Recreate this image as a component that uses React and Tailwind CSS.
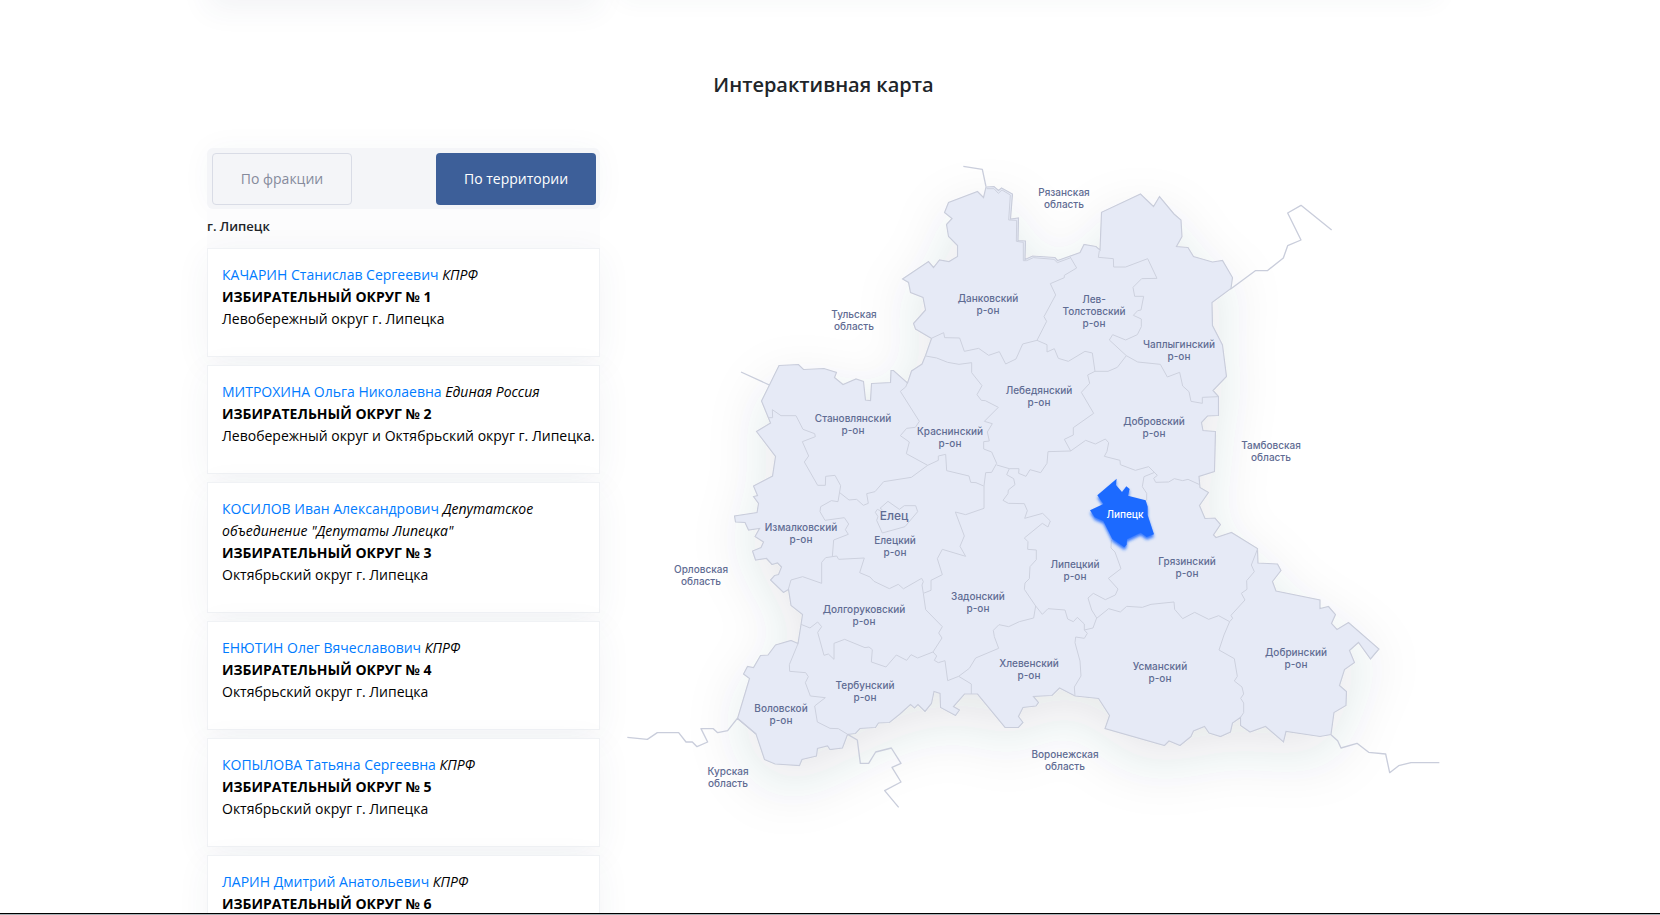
import React from 'react'

const deputies = [
    { id: 1, name: "КАЧАРИН Станислав Сергеевич", party: "КПРФ", area: "Левобережный округ г. Липецка" },
    { id: 2, name: "МИТРОХИНА Ольга Николаевна", party: "Единая Россия", area: "Левобережный округ и Октябрьский округ г. Липецка." },
    { id: 3, name: "КОСИЛОВ Иван Александрович", party: "Депутатское объединение \"Депутаты Липецка\"", area: "Октябрьский округ г. Липецка" },
    { id: 4, name: "ЕНЮТИН Олег Вячеславович", party: "КПРФ", area: "Октябрьский округ г. Липецка" },
    { id: 5, name: "КОПЫЛОВА Татьяна Сергеевна", party: "КПРФ", area: "Октябрьский округ г. Липецка" },
    { id: 6, name: "ЛАРИН Дмитрий Анатольевич", party: "КПРФ" },
]

const region = "986,187 994,186.5 998.5,190.5 1001.5,188 1012.5,194 1010.5,219 1018.5,218 1018,240.5 1025.5,241 1025,259.5 1032.5,256 1055,257.5 1057.5,260.5 1080,252.5 1084,244.5 1096,246.5 1100,250 1101.5,212.3 1140.5,194 1153.5,206.5 1159.5,196.5 1174,214 1181,220 1182,236.5 1176.5,246.5 1188,247.5 1193.5,256.5 1212.5,262 1222.5,260.5 1232.5,277.5 1231,288.5 1212,302.5 1212.5,325.5 1222.5,345 1226.5,376.5 1213,390.5 1218.5,396.5 1218.5,415.5 1207.5,416 1201.5,422.5 1203,430.5 1215.5,431.5 1214.5,471.5 1199,476.5 1200,487.5 1208.5,492.5 1199.5,505.5 1205,518.5 1215,518 1220.5,524.5 1213.5,535 1216,537.5 1231.5,532.5 1257.5,548.5 1258,563 1277.5,564 1281,570.5 1272.5,581.5 1276,591 1320,600 1320,608.5 1328.5,606.5 1335.5,614.5 1331.5,623.5 1337,629.5 1348.5,622.5 1379,649 1370.5,659 1358.5,642.5 1349.5,650.5 1354.5,662.5 1344.5,669.5 1339.5,685.5 1346.5,691.5 1346,705.5 1334,712.5 1331,734.5 1320,736.5 1286,731.5 1283.5,742 1265.5,726.5 1250,732 1240.5,725.5 1240.5,717.5 1232.5,723 1230.5,732 1220.5,736.5 1209,733 1204.5,726.5 1193.5,731 1191,736.5 1180,745.5 1169,741 1164.5,745.5 1105,728.5 1109.5,715.5 1098.5,698.5 1075,696 1059.5,688 1052,695.5 1033.5,696.5 1038.5,702.5 1036,706 1023,707.5 1018.5,716.5 1023,722.5 1018.5,727.5 1005,727.5 977.5,694 964.5,694 953.5,706.5 959.5,710 955.5,715.5 940.5,707.5 940,693.5 934,691.5 931.5,703.5 925,711.5 918,704.5 914.5,708 910.5,704.5 900,714 889.5,722.5 878.5,723 875.5,727.5 860,728.5 855.5,733.5 847.5,734.5 842.5,748 830,749.5 827.5,746 817.5,748.5 816.5,756 802,759.5 799.5,765.5 775,764 764.5,759.5 756,734 737.5,718.5 749.5,678.5 743.5,674 747.5,666.5 753.5,667.5 760.5,655.5 768,655 775.5,645 791,640.5 798,643.5 801,624.5 802.5,614.5 791,605.5 788.5,589.5 783.5,592.5 770.5,580 774.5,575.5 778.5,574.5 781.5,567 777.5,563 772,564.5 766.5,558.5 755.5,560 752.5,551 761,547.5 763.5,542 755,536.5 759.5,528.5 748.5,530 745,522.5 735.5,522 734.5,516 757,512.5 758.5,503.5 753.5,496.5 757.5,495.5 753.5,486 772.5,476 775.5,456.5 756.5,431.5 770.5,423 761.5,401 779,365.5 798.5,364.5 803.5,369.5 824,368.5 836.5,372.5 834.5,377.5 843,384.5 856,379 863.5,381.5 865.5,400 870.5,400.5 871.5,383.5 890.5,382.5 891,370.5 893.5,370.5 907.5,383 911.5,371 922,364 925.5,355.5 931.5,338.5 915.5,329 913.5,323.5 925.5,310 923,297.5 910.5,292.5 908.5,282.5 902.5,279 928.5,261.5 933.5,267.5 939.5,260 949,261.5 957.5,256.5 957.5,245.5 948.5,236.5 946.5,224.5 952,218.5 944.5,212.5 948.5,202.5 977.5,191.5 983.5,197.5"

// district borders, each sheet has its own origin and is drawn at 3:1
const sheets = [
    {
        origin: "translate(880 150) scale(0.33333)",
        lines: [
            "570,320 590,354 553,376 553,383 511,401 527,435 492,500 500,514 471,571",
            "154,565 191,548 194,563 239,564 253,604 296,595 326,616 358,605 377,642 408,627 428,582 471,571 501,584 501,606 523,596 535,625 565,634 615,604 637,609 645,664",
            "320,116 342,116 355,130 366,120 391,135 386,210 410,211 409,274 430,277 430,332 440,332 460,323 522,328 532,338 570,324",
        ],
        roads: ["250,49 307,58 318,110"],
    },
    {
        origin: "translate(1090 180) scale(0.33333)",
        lines: [
            "28,212 25,232 70,236 71,261 107,261 173,236 201,295 155,296 129,322 134,349 161,349 153,390 143,392 130,406 154,417 154,440 142,464 107,480 68,464 58,480 109,527 82,562 54,574 15,574",
            "109,527 143,546 211,553 232,591 269,577 278,618 297,635 303,664 337,670 337,652 385,650",
        ],
        roads: ["421,328 496,272 532,272 580,234 593,197 633,180 593,99 633,76 725,150"],
    },
    {
        origin: "translate(920 330) scale(0.33333)",
        lines: [
            "17,78 50,84 83,97 117,103 155,98 155,128 186,167 171,194 184,211 196,212 235,232 193,274 217,281 202,306 208,333 191,335 191,357 215,366 230,400 215,427 197,428 192,468 192,535",
            "525,124 503,135 509,160 484,187 521,250 460,293 460,315 433,328 452,363 384,365 381,400 362,428 330,419 318,439 296,430 297,416 268,416 230,405",
            "452,363 497,331 526,342 556,327 566,338 561,364 553,379 600,391 601,404 646,421 686,410 712,436 701,445 707,457 746,456 763,446 788,452 804,448 837,463",
            "704,427 672,440 667,470 680,490 680,512",
        ],
        roads: [],
    },
    {
        origin: "translate(900 460) scale(0.33333)",
        lines: [
            "252,145 197,164 166,156 193,228 180,259 197,289 127,268 112,296 127,344 93,361 93,391 70,400",
            "328,26 320,44 341,56 345,74 325,90 324,101 309,121 325,130 373,131 382,152 374,175 428,160 451,183 444,201 427,190 373,234 384,245 383,268 409,270 409,299 390,320 388,356 375,369 373,388 407,438 427,463 444,446 495,450 503,477 520,485 532,472 553,492 553,510 562,520 553,535 527,531 525,548 540,603 543,648 523,681 525,708",
            "634,240 633,264 645,276 663,326 625,355 654,387 646,405 616,419 580,400 564,414 575,450 590,474",
            "553,510 579,504 590,474",
            "407,438 401,474 358,485 326,500 297,494 280,511 283,530 296,565 227,594 208,625 176,649 214,672 214,702",
            "11,386 65,355 70,365 66,375 70,400 77,449 127,500 116,519 126,534 99,576 110,588 103,601 115,608 135,602 143,662 176,649",
        ],
        roads: [],
    },
    {
        origin: "translate(1080 400) scale(0.33333)",
        lines: [
            "50,655 86,626 121,636 140,619 187,622 213,613 282,606 284,628 308,656 344,637 386,658 416,647 449,665 458,655 453,646 495,600 484,580 501,568 500,542 523,515 514,495 533,446",
            "449,665 432,705 417,750 463,776 472,829 463,843 486,861 491,882 482,895 491,909 491,938 481,953",
        ],
        roads: ["753,1004 773,1022 783,1044 831,1030 866,1057 917,1062 929,1118 956,1097 993,1088 1078,1088"],
    },
    {
        origin: "translate(720 340) scale(0.33333)",
        lines: [
            "337,650 341,600 385,583 376,569 386,552 373,533 315,541 300,515 302,500 334,482 354,485 362,437 345,406 317,409 316,436 293,436 253,366 266,348 247,305 286,290 284,281 249,268 228,227 183,227 157,209 158,233 146,233",
            "358,457 387,480 410,478 430,496 445,490 440,461 465,455 491,425 574,412 623,376 655,361 655,348 677,343 680,392 747,408 752,427 768,428 791,438",
            "562,129 557,141 541,154 598,244 586,262 560,265 541,287 568,306 559,341 623,376",
            "487,509 480,505 504,484 538,508 553,497 587,497 593,515 555,560 487,579 470,541 474,530 466,517 472,508 487,515",
        ],
        roads: ["63,96 148,135"],
    },
    {
        origin: "translate(620 500) scale(0.33333)",
        lines: [
            "505,268 513,240 548,230 605,250 605,187 617,173 650,168 656,178 733,174 719,218 750,231 762,244 808,266 835,253 851,267",
            "543,373 570,384 593,366 605,380 593,397 612,466 625,462 642,478 642,430 674,418 735,443 747,441 757,449 754,486 798,501 829,465 860,481 873,464 893,474 939,456",
            "534,431 508,494 509,514 557,518 565,530 556,548 571,588 616,593 584,618 592,666 630,685 655,686 683,703",
        ],
        roads: [
            "22,712 82,718 112,698 176,698 198,726 217,726 231,740 263,726 243,686 280,686 293,698 323,692 352,655 408,702",
            "683,703 712,720 721,790 746,790 767,756 814,744 843,790 816,802 843,846 794,872 836,922",
        ],
    },
]

const lipetsk = "110,236 108,255 126,276 139,259 149,267 144,287 197,301 203,320 203,345 222,403 200,411 182,398 141,418 140,434 133,442 97,417 70,363 44,352 30,331 70,312 52,286"

const labels = [
    { x: 1064, y: 196, text: ["Рязанская", "область"] },
    { x: 854, y: 318, text: ["Тульская", "область"] },
    { x: 1271, y: 449, text: ["Тамбовская", "область"] },
    { x: 701, y: 573, text: ["Орловская", "область"] },
    { x: 728, y: 775, text: ["Курская", "область"] },
    { x: 1065, y: 758, text: ["Воронежская", "область"] },
    { x: 988, y: 302, text: ["Данковский", "р-он"] },
    { x: 1094, y: 303, text: ["Лев-", "Толстовский", "р-он"] },
    { x: 1179, y: 348, text: ["Чаплыгинский", "р-он"] },
    { x: 853, y: 422, text: ["Становлянский", "р-он"] },
    { x: 950, y: 435, text: ["Краснинский", "р-он"] },
    { x: 1039, y: 394, text: ["Лебедянский", "р-он"] },
    { x: 1154, y: 425, text: ["Добровский", "р-он"] },
    { x: 801, y: 531, text: ["Измалковский", "р-он"] },
    { x: 895, y: 544, text: ["Елецкий", "р-он"] },
    { x: 864, y: 613, text: ["Долгоруковский", "р-он"] },
    { x: 865, y: 689, text: ["Тербунский", "р-он"] },
    { x: 781, y: 712, text: ["Воловской", "р-он"] },
    { x: 978, y: 600, text: ["Задонский", "р-он"] },
    { x: 1029, y: 667, text: ["Хлевенский", "р-он"] },
    { x: 1075, y: 568, text: ["Липецкий", "р-он"] },
    { x: 1187, y: 565, text: ["Грязинский", "р-он"] },
    { x: 1160, y: 670, text: ["Усманский", "р-он"] },
    { x: 1296, y: 656, text: ["Добринский", "р-он"] },
]

function Deputy(props) {
    return (
        <li className="border border-[#f0f2f5] bg-white pt-[15px] pb-[26px] pl-[14px] shadow-[0_8px_34px_rgba(50,65,100,0.06)]">
            <p>
                <a href="#deputy" className="text-[#007bff]">{props.name}</a> <em>{props.party}</em>
            </p>
            <p className="font-bold">ИЗБИРАТЕЛЬНЫЙ ОКРУГ № {props.id}</p>
            {props.area && <p className="whitespace-nowrap">{props.area}</p>}
        </li>
    )
}

function RegionMap() {
    return (
        <svg viewBox="620 148 820 680" className="w-full overflow-visible" role="img" aria-label="Липецкая область">
            <defs>
                <filter id="haze" x="-20%" y="-20%" width="140%" height="140%">
                    <feDropShadow dx="0" dy="20" stdDeviation="28" floodColor="#3c4257" floodOpacity="0.12" />
                </filter>
                <filter id="glow" x="-20%" y="-20%" width="140%" height="140%">
                    <feDropShadow dx="0" dy="8" stdDeviation="4" floodColor="#1f6bff" floodOpacity="0.9" />
                </filter>
            </defs>
            <polygon points={region} fill="#e6eaf6" stroke="#c9cddb" strokeWidth="1.2" filter="url(#haze)" />
            {sheets.map((sheet) => (
                <g key={sheet.origin} transform={sheet.origin} fill="none" strokeLinejoin="round">
                    {sheet.lines.map((points) => (
                        <polyline key={points} points={points} stroke="#cdd1de" strokeWidth="3" />
                    ))}
                    {sheet.roads.map((points) => (
                        <polyline key={points} points={points} stroke="#c9cddb" strokeWidth="4" />
                    ))}
                </g>
            ))}
            <g transform="translate(1080 400) scale(0.33333)">
                <polygon points={lipetsk} fill="#1f6bff" filter="url(#glow)" />
            </g>
            <g className="font-['Inter'] text-[10px] font-medium" fill="#5f6c93" textAnchor="middle">
                {labels.map((label) => (
                    <text key={label.text.join(" ")} y={label.y}>
                        {label.text.map((line, i) => (
                            <tspan key={line} x={label.x} dy={i ? 12 : 0}>{line}</tspan>
                        ))}
                    </text>
                ))}
                <text x="894" y="520" className="text-[12px]">Елец</text>
                <text x="1125" y="518" fill="#ffffff">Липецк</text>
            </g>
        </svg>
    )
}

export default function App() {
    return (
        <div className="relative h-screen overflow-hidden bg-white pr-[13px] font-['Open_Sans',sans-serif] text-[#212529]">
            <div className="mx-auto max-w-[1233px]">
                <div className="-mt-16 flex gap-5">
                    <div className="h-16 w-[393px] shrink-0 shadow-[0_10px_30px_rgba(50,65,100,0.06)]"></div>
                    <div className="h-16 flex-grow shadow-[0_2px_24px_rgba(50,75,90,0.04)]"></div>
                </div>
                <h2 className="mt-[70px] text-center text-[20px] leading-[30px] font-semibold">Интерактивная карта</h2>
                <div className="mt-12 flex items-start gap-5">
                    <section className="w-[393px] shrink-0">
                        <div className="flex justify-between rounded-md bg-[#f4f5f8] pt-[5px] pr-1 pb-1 pl-[5px] text-sm shadow-[0_0_30px_rgba(50,65,100,0.04)]">
                            <button className="h-[52px] w-[140px] rounded border border-[#d9dce6] text-[#868b9c]">По фракции</button>
                            <button className="h-[52px] w-40 rounded bg-[#3d5f99] text-white">По территории</button>
                        </div>
                        <div className="bg-[#fcfcfd] pt-[6px] pb-[11px]">
                            <h3 className="text-[13px] leading-[22px] font-semibold">г. Липецк</h3>
                        </div>
                        <ul className="flex flex-col gap-2 text-sm leading-[22px] text-black">
                            {deputies.map((deputy) => (
                                <Deputy key={deputy.id} {...deputy} />
                            ))}
                        </ul>
                    </section>
                    <div className="flex-grow">
                        <RegionMap />
                    </div>
                </div>
            </div>
            <div className="absolute inset-x-0 bottom-0 h-[2px] border-t border-black bg-[#a9b0b5]"></div>
        </div>
    )
}
